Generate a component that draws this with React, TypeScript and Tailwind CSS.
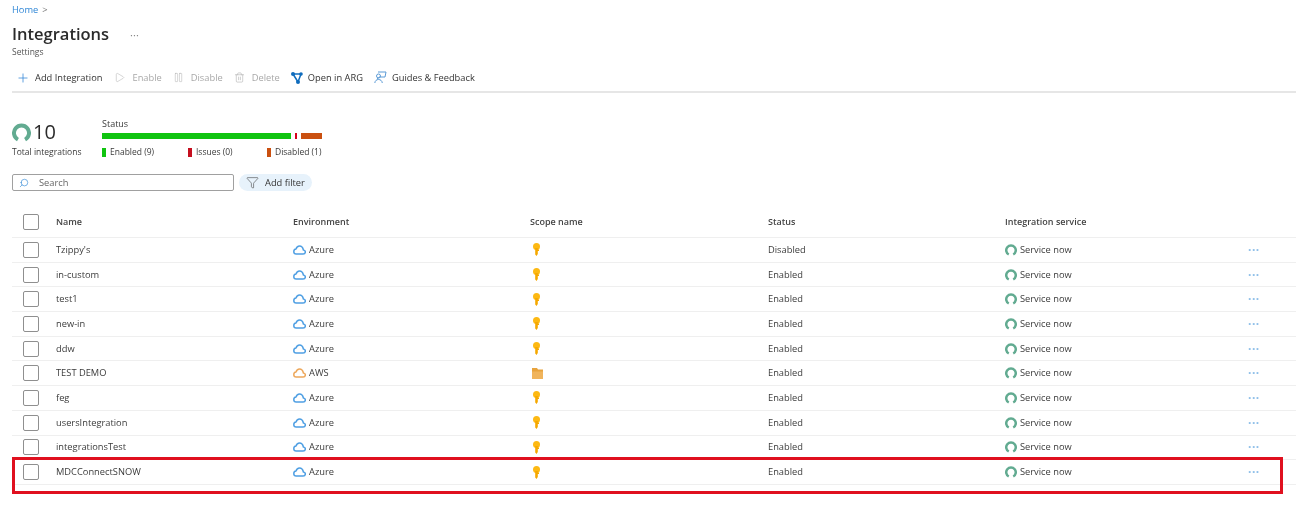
import { ReactNode } from "react";
import { Filter, Play, Plus, Pause, Search, Trash2 } from "lucide-react";

type Row = {
  name: string;
  env: "Azure" | "AWS";
  status: string;
};

const rows: Row[] = [
  { name: "Tzippy's", env: "Azure", status: "Disabled" },
  { name: "in-custom", env: "Azure", status: "Enabled" },
  { name: "test1", env: "Azure", status: "Enabled" },
  { name: "new-in", env: "Azure", status: "Enabled" },
  { name: "ddw", env: "Azure", status: "Enabled" },
  { name: "TEST DEMO", env: "AWS", status: "Enabled" },
  { name: "feg", env: "Azure", status: "Enabled" },
  { name: "usersIntegration", env: "Azure", status: "Enabled" },
  { name: "integrationsTest", env: "Azure", status: "Enabled" },
  { name: "MDCConnectSNOW", env: "Azure", status: "Enabled" },
];

function Cloud({ color }: { color: string }) {
  return (
    <svg width="13" height="10" viewBox="0 0 13 10" fill="none" className="shrink-0">
      <path
        d="M3.2 9h6.9c1.3 0 2.2-.9 2.2-2 0-1.100-.8-1.900-1.900-2C9.900 2.600 8.400 1 6.500 1 4.800 1 3.500 2.300 3 4.100 1.700 4.300.8 5.400.8 6.700.8 8 1.900 9 3.200 9Z"
        stroke={color}
        strokeWidth="1.500"
        strokeLinejoin="round"
      />
    </svg>
  );
}

function Key() {
  return (
    <svg width="9" height="13" viewBox="0 0 9 13" className="shrink-0">
      <circle cx="4.500" cy="3.500" r="3.500" fill="#fdb913" />
      <path d="M3.200 5h2.600v1.500H7v1.500H5.800v3L4.500 13l-1.300-1.500Z" fill="#f5a800" />
    </svg>
  );
}

function Folder() {
  return (
    <svg width="11" height="11" viewBox="0 0 11 11" className="shrink-0">
      <path d="M0 0h5l1 1.500h5V11H0Z" fill="#e8a33d" />
      <path d="M0 3.500h11V11H0Z" fill="#f0b45c" />
    </svg>
  );
}

function Ring({ size }: { size: number }) {
  return (
    <svg width={size} height={size} viewBox="0 0 24 24" fill="none" className="shrink-0">
      <path d="M7.500 21A9.500 9.500 0 1 1 16.500 21" stroke="#62ab91" strokeWidth="5" />
    </svg>
  );
}

function Graph() {
  return (
    <svg width="12" height="12" viewBox="0 0 12 12" className="shrink-0">
      <path d="M2 2h8M2 2l5 8M10 2 7 10" stroke="#0f6cbd" strokeWidth="1.500" />
      <circle cx="2" cy="2" r="2" fill="#0f6cbd" />
      <circle cx="10" cy="2" r="1.800" fill="#0f6cbd" />
      <circle cx="7" cy="10" r="2" fill="#0f6cbd" />
    </svg>
  );
}

function Guides() {
  return (
    <svg width="13" height="13" viewBox="0 0 13 13" fill="none" className="shrink-0">
      <path d="M4 1h8l-1 5H5.500L3 8" stroke="#5c9bd6" strokeWidth="1" />
      <circle cx="4.500" cy="5" r="2" stroke="#5c9bd6" strokeWidth="1" />
      <path d="M.8 12c.3-2.300 1.700-3.500 3.700-3.500S8 9.700 8.300 12" stroke="#5c9bd6" strokeWidth="1" />
    </svg>
  );
}

function Checkbox() {
  return (
    <div className="ml-[11px] h-[16px] w-[16px] rounded-[2px] border-[1.5px] border-[#8f8f8f] bg-white" />
  );
}

function ToolButton({ icon, label, off }: { icon: ReactNode; label: string; off?: boolean }) {
  return (
    <div className={`flex items-center ${off ? "gap-[7px] text-[#a8a8a8]" : "gap-[5px] text-[#333]"}`}>
      {icon}
      <span>{label}</span>
    </div>
  );
}

function Legend({ color, label, className }: { color: string; label: string; className: string }) {
  return (
    <div className={`flex items-center gap-[4px] ${className}`}>
      <div className={`h-[9px] w-[4px] ${color}`} />
      <span>{label}</span>
    </div>
  );
}

export default function App() {
  return (
    <div
      className="relative h-[508px] w-[1296px] overflow-hidden bg-white pt-[3px] text-[9.3px] text-[#3b3b3b] blur-[0.5px]"
      style={{ fontFamily: '"Open Sans", "Noto Sans", sans-serif' }}
    >
      <div className="flex h-[14px] items-center gap-[4px] pl-[12px] text-[#2f86d6]">
        <span>Home</span>
        <span className="text-[#777]">&gt;</span>
      </div>

      <div className="mt-[6px] flex h-[22px] items-center pl-[12px]">
        <h1 className="text-[16.5px] font-semibold text-[#2b2b2b]">Integrations</h1>
        <span className="ml-[21px] text-[11px] leading-none text-[#888]">···</span>
      </div>
      <div className="pt-[1px] pl-[12px] text-[8.5px] leading-[12px] text-[#555]">Settings</div>

      <div className="mt-[10px] ml-[12px] flex h-[25px] items-start gap-[11px] border-b-2 border-[#e6e6e6] pt-[3px] pl-[4px]">
        <ToolButton icon={<Plus size={14} strokeWidth={1.300} className="text-[#2f86d6]" />} label="Add Integration" />
        <ToolButton icon={<Play size={11} strokeWidth={1} className="ml-[1px]" />} label="Enable" off />
        <ToolButton icon={<Pause size={11} strokeWidth={1} />} label="Disable" off />
        <ToolButton icon={<Trash2 size={11} strokeWidth={1.200} />} label="Delete" off />
        <ToolButton icon={<Graph />} label="Open in ARG" />
        <ToolButton icon={<Guides />} label="Guides & Feedback" />
      </div>

      <div className="mt-[25px] flex pl-[12px]">
        <div className="w-[90px] pt-[4px]">
          <div className="flex items-center gap-[2px]">
            <Ring size={19} />
            <span className="text-[20px] leading-[20px] font-medium text-[#2b2b2b]">10</span>
          </div>
          <div className="mt-[4px] text-[8.5px] leading-[12px]">Total integrations</div>
        </div>
        <div className="w-[221px]">
          <div className="text-[9px] leading-[12px]">Status</div>
          <div className="mt-[3px] flex h-[6px]">
            <div className="w-[189px] bg-[#10c410]" />
            <div className="ml-[4px] w-[2px] bg-[#d6001c]" />
            <div className="ml-[4px] w-[21px] bg-[#ca5010]" />
          </div>
          <div className="mt-[7px] flex text-[8.5px] leading-[12px]">
            <Legend color="bg-[#10c410]" label="Enabled (9)" className="w-[86px]" />
            <Legend color="bg-[#c50f1f]" label="Issues (0)" className="w-[79px]" />
            <Legend color="bg-[#ca5010]" label="Disabled (1)" className="" />
          </div>
        </div>
      </div>

      <div className="mt-[16px] flex items-center gap-[5px] pl-[12px]">
        <div className="flex h-[17px] w-[222px] items-center gap-[10px] rounded-[2px] border-[1.5px] border-[#a0a0a0] pl-[6px] text-[#666]">
          <Search size={10} strokeWidth={1.500} className="-scale-x-100 text-[#2f86d6]" />
          <span>Search</span>
        </div>
        <div className="flex h-[17px] w-[73px] items-center gap-[6px] rounded-full bg-[#e7f2fb] pl-[7px] text-[#333]">
          <Filter size={13} strokeWidth={1} />
          <span>Add filter</span>
        </div>
      </div>

      <div className="mt-[15px] ml-[12px]">
        <div className="grid h-[32px] grid-cols-[44px_237px_237px_238px_237px_1fr] items-center border-b border-[#efefef] text-[9px] font-semibold text-[#444]">
          <Checkbox />
          <span>Name</span>
          <span>Environment</span>
          <span>Scope name</span>
          <span>Status</span>
          <span>Integration service</span>
        </div>
        {rows.map((row) => (
          <div
            key={row.name}
            className="grid h-[24.7px] grid-cols-[44px_237px_237px_238px_237px_243px_1fr] items-center border-b border-[#efefef]"
          >
            <Checkbox />
            <span>{row.name}</span>
            <span className="flex items-center gap-[3px]">
              <Cloud color={row.env === "AWS" ? "#eda85c" : "#4f9fe3"} />
              {row.env}
            </span>
            <span className="flex items-center pl-[2px]">{row.env === "AWS" ? <Folder /> : <Key />}</span>
            <span>{row.status}</span>
            <span className="flex items-center gap-[3px]">
              <Ring size={12} />
              Service now
            </span>
            <span className="text-[12px] leading-none font-bold tracking-[0.5px] text-[#8fbfe9]">···</span>
          </div>
        ))}
      </div>

      <div className="absolute top-[457px] left-[12px] h-[37px] w-[1271px] border-[3px] border-[#e0101f]" />
    </div>
  );
}
